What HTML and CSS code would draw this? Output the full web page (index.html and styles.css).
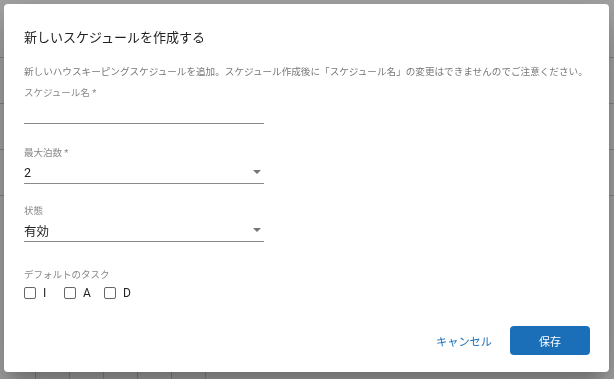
FILE: index.html
```html
<!DOCTYPE html>
<html>
<head>
    <title>新しいスケジュールを作成する</title>
    <link rel="stylesheet" href="styles.css">
</head>
<body>
    <!-- Page behind the dialog -->
    <div class="page">
        <div class="page-rows">
            <div class="page-row"></div>
            <div class="page-row"></div>
            <div class="page-row"></div>
            <div class="page-row"></div>
        </div>
        <div class="page-grid">
            <div class="page-cell"></div>
            <div class="page-cell"></div>
            <div class="page-cell"></div>
            <div class="page-cell"></div>
            <div class="page-cell"></div>
            <div class="page-cell"></div>
        </div>
    </div>

    <!-- Dialog -->
    <div class="backdrop">
        <div class="dialog">
            <h2 class="dialog-title">新しいスケジュールを作成する</h2>
            <p class="dialog-text">新しいハウスキーピングスケジュールを追加。スケジュール作成後に「スケジュール名」の変更はできませんのでご注意ください。</p>

            <div class="field field-text">
                <label class="field-label">スケジュール名 *</label>
                <div class="text-input"></div>
            </div>

            <div class="field field-stay">
                <label class="field-label">最大泊数 *</label>
                <div class="select">
                    <span class="select-value">2</span>
                    <span class="select-arrow"></span>
                </div>
            </div>

            <div class="field field-status">
                <label class="field-label">状態</label>
                <div class="select">
                    <span class="select-value">有効</span>
                    <span class="select-arrow"></span>
                </div>
            </div>

            <div class="field field-tasks">
                <label class="field-label">デフォルトのタスク</label>
                <div class="checks">
                    <label class="check"><span class="check-box"></span>I</label>
                    <label class="check"><span class="check-box"></span>A</label>
                    <label class="check"><span class="check-box"></span>D</label>
                </div>
            </div>

            <div class="dialog-actions">
                <button class="btn-text">キャンセル</button>
                <button class="btn-primary">保存</button>
            </div>
        </div>
    </div>
</body>
</html>
```

FILE: styles.css
```css
html, body {
    margin: 0;
    height: 100%;
}
body {
    font-family: Roboto, "Noto Sans CJK JP", sans-serif;
    background: #fff;
    overflow: hidden;
}
.page {
    height: 100%;
    display: flex;
    flex-direction: column;
    justify-content: space-between;
}
.page-rows {
    padding-top: 57px;
}
.page-row {
    height: 45px;
    border-top: 1px solid #d0d0d0;
}
.page-grid {
    display: flex;
    height: 40px;
    padding-left: 2px;
}
.page-cell {
    width: 33px;
    border-right: 1px solid #d0d0d0;
}
.backdrop {
    position: fixed;
    inset: 0;
    background: rgba(0, 0, 0, 0.36);
    display: flex;
    padding: 4px 5px 7px 4px;
}
.dialog {
    flex: 1;
    background: #fff;
    border-radius: 4px;
    box-shadow: 0 11px 15px -7px rgba(0,0,0,.2), 0 24px 38px 3px rgba(0,0,0,.14), 0 9px 46px 8px rgba(0,0,0,.12);
    display: flex;
    flex-direction: column;
    padding: 24px 19px 17px 20px;
}
.dialog-title {
    margin: 0;
    font-size: 13px;
    line-height: 20px;
    font-weight: 400;
    color: #222;
}
.dialog-text {
    margin: 17px 0 0;
    font-size: 9.6px;
    line-height: 14px;
    color: #777;
    white-space: nowrap;
}
.field-label {
    display: block;
    font-size: 9.5px;
    line-height: 14px;
    color: #888;
}
.field-text {
    margin-top: 7px;
}
.text-input {
    width: 240px;
    height: 23px;
    border-bottom: 1px solid #8a8a8a;
}
.field-stay {
    margin-top: 22px;
}
.field-status {
    margin-top: 20px;
}
.select {
    width: 240px;
    margin-top: 3px;
    display: flex;
    align-items: center;
    justify-content: space-between;
    height: 18px;
    padding-bottom: 2px;
    border-bottom: 1px solid #8a8a8a;
}
.select-value {
    font-size: 12.5px;
    color: #222;
}
.select-arrow {
    width: 0;
    height: 0;
    margin-right: 3px;
    border-left: 4px solid transparent;
    border-right: 4px solid transparent;
    border-top: 4px solid #757575;
}
.field-tasks {
    margin-top: 26px;
}
.checks {
    display: flex;
    margin-top: 4px;
}
.check {
    width: 40px;
    display: flex;
    align-items: center;
    gap: 7px;
    font-size: 12px;
    line-height: 14px;
    color: #222;
}
.check-box {
    width: 10px;
    height: 10px;
    border: 1px solid #666;
    border-radius: 2px;
}
.dialog-actions {
    margin-top: auto;
    display: flex;
    justify-content: flex-end;
    align-items: center;
    gap: 18px;
}
button {
    font-family: inherit;
    font-size: 11px;
    border: none;
    cursor: pointer;
}
.btn-text {
    background: none;
    color: #1a6fb8;
    padding: 0;
    font-size: 11.2px;
}
.btn-primary {
    background: #1a6fb8;
    color: #fff;
    width: 80px;
    height: 29px;
    border-radius: 4px;
}
```
